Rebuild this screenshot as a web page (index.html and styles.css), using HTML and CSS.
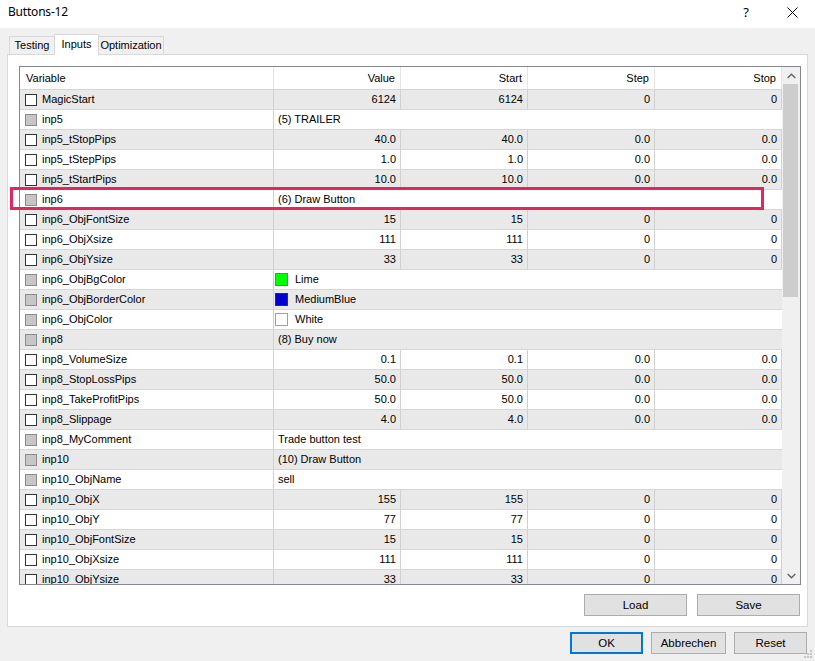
FILE: index.html
```html
<!DOCTYPE html>
<html lang="de">
<head>
<meta charset="utf-8">
<title>Buttons-12</title>
<link rel="stylesheet" href="styles.css">
</head>
<body>
<div class="window">
  <header class="titlebar">
    <span class="title">Buttons-12</span>
    <div class="caption">
      <span class="help">?</span>
      <svg class="close" width="11" height="11" viewBox="0 0 11 11"><path d="M0.5 0.5 L10.5 10.5 M10.5 0.5 L0.5 10.5" stroke="#000" stroke-width="1" fill="none"/></svg>
    </div>
  </header>

  <nav class="tabs">
    <div class="tab tab-testing">Testing</div>
    <div class="tab tab-inputs active">Inputs</div>
    <div class="tab tab-opt">Optimization</div>
  </nav>

  <section class="panel">
    <div class="grid">
      <div class="table">
        <div class="row head">
          <div class="cell c-var">Variable</div>
          <div class="cell num">Value</div>
          <div class="cell num">Start</div>
          <div class="cell num">Step</div>
          <div class="cell num">Stop</div>
        </div>

        <div class="row alt"><div class="cell c-var"><span class="cb"></span>MagicStart</div><div class="cell num">6124</div><div class="cell num">6124</div><div class="cell num">0</div><div class="cell num">0</div></div>
        <div class="row"><div class="cell c-var"><span class="cb off"></span>inp5</div><div class="cell str">(5) TRAILER</div></div>
        <div class="row alt"><div class="cell c-var"><span class="cb"></span>inp5_tStopPips</div><div class="cell num">40.0</div><div class="cell num">40.0</div><div class="cell num">0.0</div><div class="cell num">0.0</div></div>
        <div class="row"><div class="cell c-var"><span class="cb"></span>inp5_tStepPips</div><div class="cell num">1.0</div><div class="cell num">1.0</div><div class="cell num">0.0</div><div class="cell num">0.0</div></div>
        <div class="row alt"><div class="cell c-var"><span class="cb"></span>inp5_tStartPips</div><div class="cell num">10.0</div><div class="cell num">10.0</div><div class="cell num">0.0</div><div class="cell num">0.0</div></div>
        <div class="row"><div class="cell c-var"><span class="cb off"></span>inp6</div><div class="cell str">(6) Draw Button</div></div>
        <div class="row alt"><div class="cell c-var"><span class="cb"></span>inp6_ObjFontSize</div><div class="cell num">15</div><div class="cell num">15</div><div class="cell num">0</div><div class="cell num">0</div></div>
        <div class="row"><div class="cell c-var"><span class="cb"></span>inp6_ObjXsize</div><div class="cell num">111</div><div class="cell num">111</div><div class="cell num">0</div><div class="cell num">0</div></div>
        <div class="row alt"><div class="cell c-var"><span class="cb"></span>inp6_ObjYsize</div><div class="cell num">33</div><div class="cell num">33</div><div class="cell num">0</div><div class="cell num">0</div></div>
        <div class="row"><div class="cell c-var"><span class="cb off"></span>inp6_ObjBgColor</div><div class="cell str color"><span class="swatch sw-lime"></span>Lime</div></div>
        <div class="row alt"><div class="cell c-var"><span class="cb off"></span>inp6_ObjBorderColor</div><div class="cell str color"><span class="swatch sw-blue"></span>MediumBlue</div></div>
        <div class="row"><div class="cell c-var"><span class="cb off"></span>inp6_ObjColor</div><div class="cell str color"><span class="swatch sw-white"></span>White</div></div>
        <div class="row alt"><div class="cell c-var"><span class="cb off"></span>inp8</div><div class="cell str">(8) Buy now</div></div>
        <div class="row"><div class="cell c-var"><span class="cb"></span>inp8_VolumeSize</div><div class="cell num">0.1</div><div class="cell num">0.1</div><div class="cell num">0.0</div><div class="cell num">0.0</div></div>
        <div class="row alt"><div class="cell c-var"><span class="cb"></span>inp8_StopLossPips</div><div class="cell num">50.0</div><div class="cell num">50.0</div><div class="cell num">0.0</div><div class="cell num">0.0</div></div>
        <div class="row"><div class="cell c-var"><span class="cb"></span>inp8_TakeProfitPips</div><div class="cell num">50.0</div><div class="cell num">50.0</div><div class="cell num">0.0</div><div class="cell num">0.0</div></div>
        <div class="row alt"><div class="cell c-var"><span class="cb"></span>inp8_Slippage</div><div class="cell num">4.0</div><div class="cell num">4.0</div><div class="cell num">0.0</div><div class="cell num">0.0</div></div>
        <div class="row"><div class="cell c-var"><span class="cb off"></span>inp8_MyComment</div><div class="cell str">Trade button test</div></div>
        <div class="row alt"><div class="cell c-var"><span class="cb off"></span>inp10</div><div class="cell str">(10) Draw Button</div></div>
        <div class="row"><div class="cell c-var"><span class="cb off"></span>inp10_ObjName</div><div class="cell str">sell</div></div>
        <div class="row alt"><div class="cell c-var"><span class="cb"></span>inp10_ObjX</div><div class="cell num">155</div><div class="cell num">155</div><div class="cell num">0</div><div class="cell num">0</div></div>
        <div class="row"><div class="cell c-var"><span class="cb"></span>inp10_ObjY</div><div class="cell num">77</div><div class="cell num">77</div><div class="cell num">0</div><div class="cell num">0</div></div>
        <div class="row alt"><div class="cell c-var"><span class="cb"></span>inp10_ObjFontSize</div><div class="cell num">15</div><div class="cell num">15</div><div class="cell num">0</div><div class="cell num">0</div></div>
        <div class="row"><div class="cell c-var"><span class="cb"></span>inp10_ObjXsize</div><div class="cell num">111</div><div class="cell num">111</div><div class="cell num">0</div><div class="cell num">0</div></div>
        <div class="row alt"><div class="cell c-var"><span class="cb"></span>inp10_ObjYsize</div><div class="cell num">33</div><div class="cell num">33</div><div class="cell num">0</div><div class="cell num">0</div></div>
      </div>

      <div class="vscroll">
        <div class="arrow">
          <svg width="9" height="6" viewBox="0 0 9 6"><path d="M0.7 5 L4.5 1.2 L8.3 5" stroke="#606060" stroke-width="1.3" fill="none"/></svg>
        </div>
        <div class="track"><div class="thumb"></div></div>
        <div class="arrow">
          <svg width="9" height="6" viewBox="0 0 9 6"><path d="M0.7 1 L4.5 4.8 L8.3 1" stroke="#606060" stroke-width="1.3" fill="none"/></svg>
        </div>
      </div>
    </div>

    <div class="panel-actions">
      <button class="btn wide">Load</button>
      <button class="btn wide">Save</button>
    </div>
  </section>

  <footer class="dialog-actions">
    <button class="btn default">OK</button>
    <button class="btn mid">Abbrechen</button>
    <button class="btn">Reset</button>
  </footer>

  <div class="mark"></div>

  <svg class="grip" width="9" height="9" viewBox="0 0 9 9">
    <rect x="6" y="0" width="2" height="2" fill="#c4c4c4"/>
    <rect x="3" y="3" width="2" height="2" fill="#c4c4c4"/>
    <rect x="6" y="3" width="2" height="2" fill="#c4c4c4"/>
    <rect x="0" y="6" width="2" height="2" fill="#c4c4c4"/>
    <rect x="3" y="6" width="2" height="2" fill="#c4c4c4"/>
    <rect x="6" y="6" width="2" height="2" fill="#c4c4c4"/>
  </svg>
</div>
</body>
</html>
```

FILE: styles.css
```css
* {
  box-sizing: border-box;
}

html,
body {
  margin: 0;
  padding: 0;
  background: #f0f0f0;
}

.window {
  position: relative;
  width: 815px;
  height: 661px;
  overflow: hidden;
  background: #f0f0f0;
  font-family: "Liberation Sans", Arial, sans-serif;
  font-size: 11px;
  color: #000;
}

/* caption bar */
.titlebar {
  height: 28px;
  background: #fff;
  display: flex;
  align-items: flex-start;
  justify-content: space-between;
  padding-left: 8px;
}

.title {
  font-family: "Noto Sans", "Open Sans", sans-serif;
  font-size: 12px;
  letter-spacing: -0.2px;
  line-height: 24px;
}

.caption {
  display: flex;
  align-items: center;
  height: 24px;
  padding-right: 17px;
}

.help {
  font-family: "Noto Sans", sans-serif;
  font-size: 13px;
  margin-right: 38px;
  line-height: 24px;
}

.close {
  display: block;
}

/* tab strip */
.tabs {
  display: flex;
  align-items: flex-end;
  height: 20px;
  margin-top: 6px;
  padding-left: 9px;
  position: relative;
  z-index: 1;
}

.tab {
  height: 18px;
  line-height: 17px;
  text-align: center;
  border: 1px solid #d9d9d9;
  border-bottom: none;
  background: #f0f0f0;
  white-space: nowrap;
}

.tab-testing {
  width: 46px;
}

.tab-inputs {
  width: 45px;
  margin-left: -1px;
}

.tab-opt {
  width: 66px;
  margin-left: -1px;
}

.tab.active {
  height: 21px;
  line-height: 18px;
  background: #fff;
  margin-bottom: -1px;
  position: relative;
  z-index: 2;
}

/* tab page */
.panel {
  margin-left: 7px;
  width: 801px;
  height: 573px;
  border: 1px solid #d9d9d9;
  background: #fff;
  padding: 11px 5px 0 11px;
}

.grid {
  display: flex;
  width: 782px;
  height: 519px;
  border: 1px solid #828790;
  background: #fff;
}

.table {
  width: 762px;
  height: 100%;
  overflow: hidden;
}

.row {
  display: grid;
  grid-template-columns: 254px 127px 127px 127px 127px;
  height: 20px;
  border-bottom: 1px solid #d7d7d7;
  background: #fff;
}

.row.alt {
  background: #e9e9e9;
}

.row.head {
  height: 23px;
  border-bottom: 1px solid #d5d5d5;
  background: #fff;
}

.cell {
  border-right: 1px solid #d0d0d0;
  line-height: 19px;
  white-space: nowrap;
  overflow: hidden;
}

.head .cell {
  border-right-color: #e5e5e5;
  line-height: 22px;
}

.head .c-var {
  padding-left: 6px;
}

.head .num {
  padding-right: 5px;
}

.c-var {
  display: flex;
  align-items: center;
  padding-left: 5px;
}

.num {
  text-align: right;
  padding-right: 4px;
}

.str {
  grid-column: 2 / span 4;
  border-right: none;
  padding-left: 4px;
}

.str.color {
  display: flex;
  align-items: center;
  padding-left: 1px;
}

/* option checkbox */
.cb {
  width: 12px;
  height: 12px;
  flex: none;
  margin-right: 5px;
  background: #fff;
  border: 1px solid #333;
}

.cb.off {
  background: #c6c6c6;
  border-color: #8c8c8c;
}

/* colour preview square */
.swatch {
  width: 13px;
  height: 13px;
  flex: none;
  margin-right: 7px;
  border: 1px solid rgba(0, 0, 0, 0.2);
}

.sw-lime {
  background: #00ff00;
}

.sw-blue {
  background: #0000cd;
  border-color: #2a2a80;
}

.sw-white {
  background: #fff;
  border-color: #a0a0a0;
}

/* vertical scrollbar */
.vscroll {
  width: 18px;
  height: 100%;
  display: flex;
  flex-direction: column;
  background: #f0f0f0;
}

.arrow {
  height: 17px;
  flex: none;
  display: flex;
  align-items: center;
  justify-content: center;
}

.track {
  flex: 1;
  padding: 0 2px 0 1px;
}

.thumb {
  height: 213px;
  background: #cdcdcd;
}

/* buttons */
.btn {
  height: 22px;
  padding: 0;
  border: 1px solid #adadad;
  background: #e1e1e1;
  font-family: "Liberation Sans", Arial, sans-serif;
  font-size: 11.5px;
  color: #000;
}

.panel-actions {
  display: flex;
  justify-content: flex-end;
  gap: 10px;
  margin-top: 9px;
  padding-right: 2px;
}

.btn.wide {
  width: 103px;
}

.dialog-actions {
  display: flex;
  justify-content: flex-end;
  gap: 8px;
  margin-top: 5px;
  padding-right: 8px;
}

.dialog-actions .btn {
  width: 73px;
}

.dialog-actions .btn.mid {
  width: 75px;
}

.btn.default {
  border-color: #0078d7;
  box-shadow: inset 0 0 0 1px #0078d7;
}

/* highlight frame drawn over the inp6 row */
.mark {
  position: absolute;
  left: 10px;
  top: 187px;
  width: 754px;
  height: 23px;
  border: 3px solid #e0285f;
  pointer-events: none;
}

/* size grip */
.grip {
  position: absolute;
  right: 2px;
  bottom: 2px;
}
```
